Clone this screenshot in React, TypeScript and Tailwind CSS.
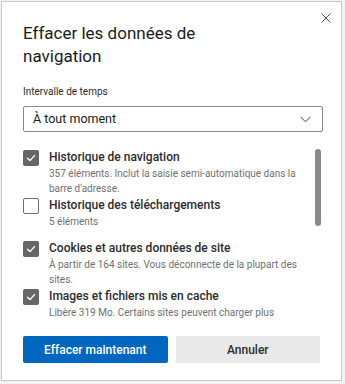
const items = [
  {
    label: "Historique de navigation",
    desc: "357 éléments. Inclut la saisie semi-automatique dans la barre d'adresse.",
    checked: true,
    extra: "",
  },
  { label: "Historique des téléchargements", desc: "5 éléments", checked: false, extra: "" },
  {
    label: "Cookies et autres données de site",
    desc: "À partir de 164 sites. Vous déconnecte de la plupart des sites.",
    checked: true,
    extra: "mt-[10px]",
  },
  {
    label: "Images et fichiers mis en cache",
    desc: "Libère 319 Mo. Certains sites peuvent charger plus",
    checked: true,
    extra: "",
  },
];

function Checkbox({ checked }: { checked: boolean }) {
  if (!checked) {
    return <div className="w-4 h-4 shrink-0 rounded-[2px] border border-[#6e6e6e] bg-white" />;
  }
  return (
    <div className="w-4 h-4 shrink-0 rounded-[2px] bg-[#666666] flex items-center justify-center">
      <svg width="10" height="10" viewBox="0 0 10 10" fill="none">
        <path d="M1.5 5.3 L4 7.6 L8.6 2.4" stroke="white" strokeWidth="1.4" strokeLinecap="round" strokeLinejoin="round" />
      </svg>
    </div>
  );
}

export default function App() {
  return (
    <div className="w-[345px] h-[384px] bg-[#f3f3f3] pt-[1px] pl-[1px]" style={{ fontFamily: 'Roboto, "Noto Sans", sans-serif' }}>
      <div className="relative w-[341px] h-[380px] bg-white border border-[#c8c8c8] px-[21px] text-[#1b1b1b]">
        {/* Fermer */}
        <button className="absolute right-[10px] top-[11px] w-[10px] h-[10px]" title="Fermer">
          <svg width="10" height="10" viewBox="0 0 10 10" className="block">
            <path d="M0.5 0.5 L9.5 9.5 M9.5 0.5 L0.5 9.5" stroke="#555" strokeWidth="1" />
          </svg>
        </button>

        <h2 className="pt-[20px] text-[17px] leading-[23px] font-normal w-[240px]">
          Effacer les données de navigation
        </h2>

        <div className="mt-[17px] text-[10px] leading-[14px] text-[#2b2b2b]">Intervalle de temps</div>

        {/* Select */}
        <div className="mt-[7px] h-[26px] w-[300px] border border-[#8a8a8a] rounded-[2px] flex items-center justify-between pl-[9px] pr-[11px]">
          <span className="text-[12.5px]">À tout moment</span>
          <svg width="11" height="7" viewBox="0 0 11 7">
            <path d="M0.5 0.8 L5.5 5.8 L10.5 0.8" stroke="#444" strokeWidth="1" fill="none" />
          </svg>
        </div>

        {/* Liste */}
        <div className="relative mt-[17px] h-[178px]">
          <div className="flex flex-col gap-[1px] pr-[11px]">
            {items.map((it) => (
              <div key={it.label} className={`flex gap-[10px] ${it.extra}`}>
                <div className="pt-[1px]">
                  <Checkbox checked={it.checked} />
                </div>
                <div>
                  <div className="text-[12px] leading-[17px] font-medium text-[#2b2b2b]">{it.label}</div>
                  <div className="text-[10px] leading-[15px] text-[#707070]">{it.desc}</div>
                </div>
              </div>
            ))}
          </div>
          <div className="absolute right-[-1px] top-0 w-[6px] h-[77px] rounded-full bg-[#8a8a8a]" />
        </div>

        {/* Boutons */}
        <div className="mt-[9px] flex gap-[8px]">
          <button className="w-[146px] h-[27px] bg-[#0067c0] text-white text-[12px] font-medium rounded-[2px]">
            Effacer maintenant
          </button>
          <button className="w-[146px] h-[27px] bg-[#e9e9e9] text-[#2b2b2b] text-[12px] font-medium rounded-[2px]">
            Annuler
          </button>
        </div>
      </div>
    </div>
  );
}
